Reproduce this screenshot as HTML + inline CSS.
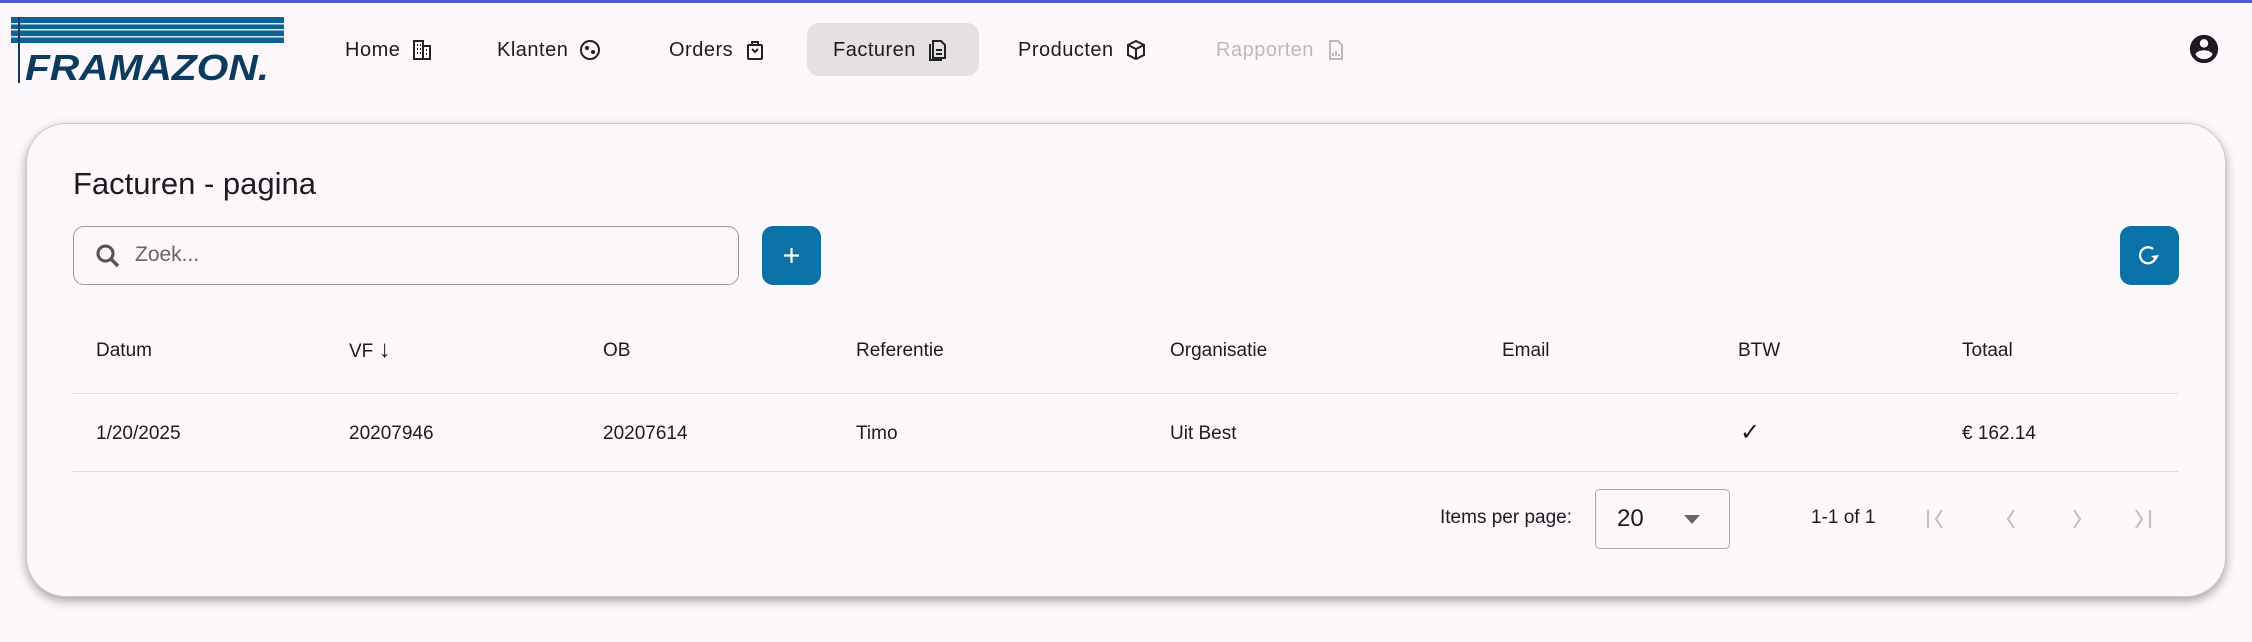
<!DOCTYPE html>
<html><head><meta charset="utf-8"><style>
*{box-sizing:border-box;margin:0;padding:0}
body{width:2252px;height:642px;background:#fdf8fc;font-family:"Liberation Sans",sans-serif;color:#1d1b20;position:relative;overflow:hidden}
.a{position:absolute}
.nav{font-size:20px;letter-spacing:0.5px;top:35px;height:30px;line-height:30px;display:flex;align-items:center;gap:10px}
.nav svg{width:24px;height:24px}
.card{left:26px;top:123px;width:2200px;height:474px;border-radius:40px;background:#fdf8fc;box-shadow:0 4px 10px rgba(0,0,0,.35);border:1px solid #ccc}
.th{top:340px;font-size:19px}
.td{top:423px;font-size:19px}
.btn{background:#0a72a6;border-radius:11px;width:59px;height:59px;top:226px}
.pg{top:507px;font-size:19px}
</style></head><body>
<div class="a" style="left:0;top:0;width:2252px;height:3px;background:#5157d6"></div>
<svg class="a" style="left:11px;top:17px" width="273" height="68" viewBox="0 0 273 68">
<rect x="0" y="0" width="273" height="26" fill="#0b6396"/>
<rect x="0" y="6" width="273" height="1.5" fill="#dce8f0"/>
<rect x="0" y="12" width="273" height="1.5" fill="#dce8f0"/>
<rect x="0" y="19" width="273" height="1.5" fill="#dce8f0"/>
<rect x="7" y="0" width="2" height="66" fill="#0b3b5e"/>
<text x="14" y="63" font-family="Liberation Sans" font-weight="bold" font-style="italic" font-size="36" fill="#0b3b5e" textLength="244" lengthAdjust="spacingAndGlyphs">FRAMAZON.</text>
</svg>
<div class="a" style="left:807px;top:23px;width:172px;height:53px;border-radius:12px;background:#e4e0e4"></div>
<div class="a nav" style="left:345px">Home <svg viewBox="0 0 24 24"><path d="M4 3h9v18H4zM13 8h7v13h-7" fill="none" stroke="#222" stroke-width="2"/><path d="M7 7h1M10 7h1M7 11h1M10 11h1M7 15h1M10 15h1M16 12h1M16 16h1" stroke="#222" stroke-width="2"/></svg></div>
<div class="a nav" style="left:497px">Klanten <svg viewBox="0 0 24 24"><circle cx="12" cy="12" r="9" fill="none" stroke="#222" stroke-width="2"/><circle cx="9" cy="10" r="2" fill="#222"/><circle cx="15" cy="14" r="2" fill="#222"/></svg></div>
<div class="a nav" style="left:669px">Orders <svg viewBox="0 0 24 24"><rect x="5" y="7" width="14" height="14" rx="1" fill="none" stroke="#222" stroke-width="2"/><path d="M9 7V4h6v3M9 11l3 3 3-3" fill="none" stroke="#222" stroke-width="2"/></svg></div>
<div class="a nav" style="left:833px">Facturen <svg viewBox="0 0 24 24"><path d="M7 3h8l4 4v13H7z M4 6v16h12" fill="none" stroke="#222" stroke-width="2"/><path d="M10 12h6M10 16h6" stroke="#222" stroke-width="2"/></svg></div>
<div class="a nav" style="left:1018px">Producten <svg viewBox="0 0 24 24"><path d="M12 3l8 4v10l-8 4-8-4V7zM4 7l8 4 8-4M12 11v10" fill="none" stroke="#222" stroke-width="2"/></svg></div>
<div class="a nav" style="left:1216px;color:#bbb">Rapporten <svg viewBox="0 0 24 24"><path d="M6 3h8l4 4v14H6z" fill="none" stroke="#bbb" stroke-width="2"/><path d="M9 18v-3M12 18v-5M15 18v-2" stroke="#bbb" stroke-width="2"/></svg></div>
<svg class="a" style="left:2187px;top:32px" width="34" height="34" viewBox="0 0 24 24"><path fill="#1d1b20" d="M12 2a10 10 0 100 20 10 10 0 000-20zm0 3a3 3 0 110 6 3 3 0 010-6zm0 14.2a7.2 7.2 0 01-6-3.2c0-2 4-3.1 6-3.1s6 1.1 6 3.1a7.2 7.2 0 01-6 3.2z"/></svg>
<div class="a card"></div>
<div class="a" style="left:73px;top:166px;font-size:31px">Facturen - pagina</div>
<div class="a" style="left:73px;top:226px;width:666px;height:59px;border:1.5px solid #999;border-radius:11px"></div>
<svg class="a" style="left:93px;top:241px" width="30" height="30" viewBox="0 0 24 24"><circle cx="10" cy="10" r="6" fill="none" stroke="#555" stroke-width="2.5"/><path d="M14.5 14.5L20 20" stroke="#555" stroke-width="2.8"/></svg>
<div class="a" style="left:135px;top:243px;font-size:21px;color:#666">Zoek...</div>
<div class="a btn" style="left:762px"><svg width="59" height="59" viewBox="0 0 59 59"><path d="M29.5 22v15M22 29.5h15" stroke="#fff" stroke-width="2.2"/></svg></div>
<div class="a btn" style="left:2120px"><svg width="59" height="59" viewBox="0 0 59 59"><path d="M33 23a8 8 0 1 0 3 7" fill="none" stroke="#fff" stroke-width="2.3"/><path d="M31 30l5 4 3-5z" fill="#fff"/></svg></div>
<div class="a th" style="left:96px">Datum</div>
<div class="a th" style="left:349px;top:336px">VF <span style="font-size:24px">&#8595;</span></div>
<div class="a th" style="left:603px">OB</div>
<div class="a th" style="left:856px">Referentie</div>
<div class="a th" style="left:1170px">Organisatie</div>
<div class="a th" style="left:1502px">Email</div>
<div class="a th" style="left:1738px">BTW</div>
<div class="a th" style="left:1962px">Totaal</div>
<div class="a" style="left:73px;top:393px;width:2105px;height:1px;background:#ddd"></div>
<div class="a td" style="left:96px">1/20/2025</div>
<div class="a td" style="left:349px">20207946</div>
<div class="a td" style="left:603px">20207614</div>
<div class="a td" style="left:856px">Timo</div>
<div class="a td" style="left:1170px">Uit Best</div>
<div class="a td" style="left:1740px;font-size:24px;top:418px">&#10003;</div>
<div class="a td" style="left:1962px">€ 162.14</div>
<div class="a" style="left:73px;top:471px;width:2105px;height:1px;background:#ddd"></div>
<div class="a pg" style="left:1440px">Items per page:</div>
<div class="a" style="left:1595px;top:489px;width:135px;height:60px;border:1.5px solid #aaa;border-radius:5px"></div>
<div class="a" style="left:1617px;top:505px;font-size:24px">20</div>
<svg class="a" style="left:1684px;top:515px" width="16" height="10"><path d="M0 0h16L8 9z" fill="#666"/></svg>
<div class="a pg" style="left:1811px">1-1 of 1</div>
<svg class="a" style="left:1922px;top:504px" width="240" height="30" viewBox="0 0 240 30" fill="none" stroke="#c4c4c4" stroke-width="2.2"><path d="M6 6v18M20 6l-6 9 6 9"/><path d="M92 6l-6 9 6 9"/><path d="M152 6l6 9-6 9"/><path d="M214 6l6 9-6 9M228 6v18"/></svg>
</body></html>
